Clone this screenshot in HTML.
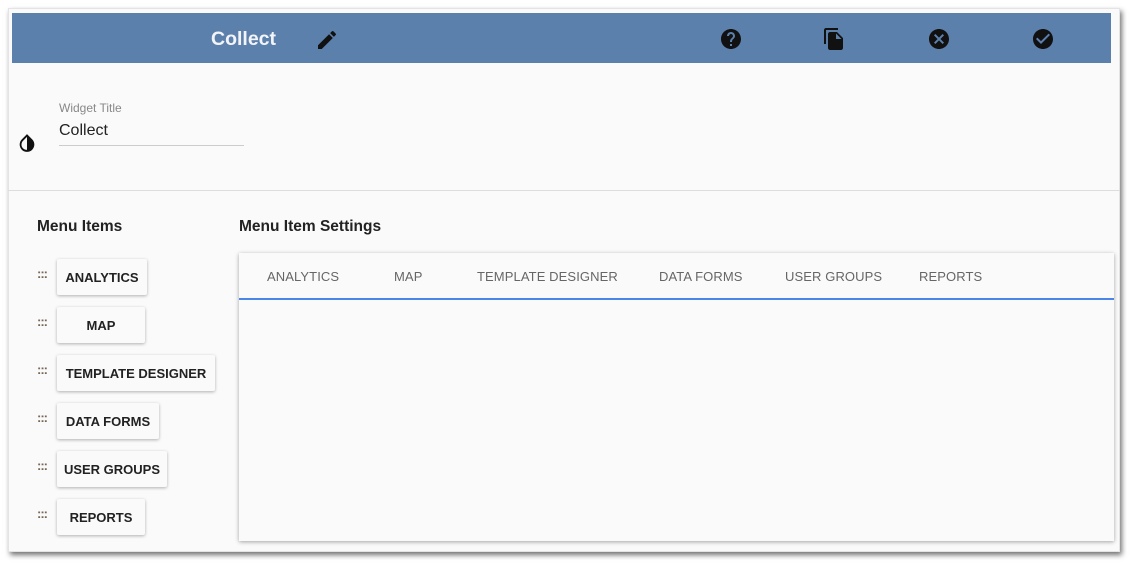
<!DOCTYPE html>
<html><head><meta charset="utf-8"><style>
*{margin:0;padding:0;box-sizing:border-box}
body{width:1134px;height:568px;background:#fff;font-family:"Liberation Sans",sans-serif;position:relative;overflow:hidden}
.panel{position:absolute;left:8px;top:8px;width:1112px;height:544px;background:#fafafa;box-shadow:2px 3px 5px rgba(0,0,0,.55);border:1px solid #e4e4e4}
.hdr{position:absolute;left:12px;top:13px;width:1099px;height:50px;background:#5c80ac}
.ttl{position:absolute;left:211px;top:28px;color:#f2f4f8;font-weight:bold;font-size:19.5px}
.ic{position:absolute}
.lbl{position:absolute;left:59px;top:101px;font-size:12px;color:#888}
.val{position:absolute;left:59px;top:122px;font-size:16px;color:#222}
.line{position:absolute;left:59px;top:145px;width:185px;height:1px;background:#ccc}
.sep{position:absolute;left:8px;top:190px;width:1112px;height:1px;background:#ddd}
.h{position:absolute;font-weight:bold;font-size:15.5px;color:#222}
.btn{position:absolute;left:57px;height:36px;background:#fafafa;box-shadow:0 1px 3px rgba(0,0,0,.3);border-radius:2px;font-size:13px;font-weight:bold;color:#222;display:flex;align-items:center;justify-content:center}
.dots{position:absolute;left:37px;font-size:13px;color:#765;letter-spacing:-1px;font-weight:bold}
.tabs{position:absolute;left:239px;top:253px;width:875px;height:288px;background:#fafafa;box-shadow:0 1px 4px rgba(0,0,0,.35)}
.tab{position:absolute;top:16px;font-size:13px;color:#666;letter-spacing:.1px}
.ul{position:absolute;left:0;top:45px;width:100%;height:2px;background:#4a86e8}
</style></head><body>
<div class="panel"></div>
<div class="hdr"></div>
<div class="ttl">Collect</div>
<svg class="ic" style="left:315px;top:28px" width="24" height="24" viewBox="0 0 24 24"><path fill="#111" d="M3 17.25V21h3.75L17.81 9.94l-3.75-3.75L3 17.25zM20.71 7.04a1 1 0 000-1.41l-2.34-2.34a1 1 0 00-1.41 0l-1.83 1.83 3.75 3.75 1.83-1.83z"/></svg>
<svg class="ic" style="left:719px;top:27px" width="24" height="24" viewBox="0 0 24 24"><path fill="#111" d="M12 2C6.48 2 2 6.48 2 12s4.48 10 10 10 10-4.48 10-10S17.52 2 12 2zm1 17h-2v-2h2v2zm2.070-7.75l-.9.92C13.45 12.9 13 13.5 13 15h-2v-.5c0-1.1.45-2.1 1.17-2.83l1.24-1.26c.37-.36.59-.86.59-1.41 0-1.1-.9-2-2-2s-2 .9-2 2H8c0-2.21 1.79-4 4-4s4 1.79 4 4c0 .88-.36 1.68-.93 2.250z"/></svg>
<svg class="ic" style="left:822px;top:27px" width="24" height="24" viewBox="0 0 24 24"><path fill="#111" d="M16 1H4c-1.1 0-2 .9-2 2v14h2V3h12V1zm-1 4l6 6v10c0 1.1-.9 2-2 2H7.99C6.89 23 6 22.1 6 21l.01-14c0-1.1.89-2 1.99-2h7zm-1 7h5.5L14 6.5V12z"/></svg>
<svg class="ic" style="left:927px;top:27px" width="24" height="24" viewBox="0 0 24 24"><path fill="#111" d="M12 2C6.47 2 2 6.47 2 12s4.47 10 10 10 10-4.47 10-10S17.53 2 12 2zm5 13.59L15.59 17 12 13.41 8.41 17 7 15.59 10.59 12 7 8.41 8.41 7 12 10.59 15.59 7 17 8.41 13.41 12 17 15.59z"/></svg>
<svg class="ic" style="left:1031px;top:27px" width="24" height="24" viewBox="0 0 24 24"><path fill="#111" d="M12 2C6.48 2 2 6.48 2 12s4.48 10 10 10 10-4.48 10-10S17.52 2 12 2zm-2 15l-5-5 1.41-1.41L10 14.17l7.59-7.59L19 8l-9 9z"/></svg>
<svg class="ic" style="left:16px;top:132px" width="22" height="22" viewBox="0 0 24 24"><path fill="#111" d="M17.66 8L12 2.35 6.34 8A8.02 8.02 0 004 13.64c0 2 .78 4.11 2.34 5.67a7.99 7.99 0 0011.32 0c1.56-1.56 2.34-3.67 2.34-5.67S19.22 9.56 17.66 8zM6 14c.01-2 .62-3.27 1.76-4.4L12 5.27V19.5c-3.31 0-6-2.7-6-5.5z"/></svg>
<div class="lbl">Widget Title</div>
<div class="val">Collect</div>
<div class="line"></div>
<div class="sep"></div>
<div class="h" style="left:37px;top:218px">Menu Items</div>
<div class="h" style="left:239px;top:218px">Menu Item Settings</div>

<div class="dots" style="top:266px">:::</div><div class="btn" style="top:259px;width:90px">ANALYTICS</div>
<div class="dots" style="top:314px">:::</div><div class="btn" style="top:307px;width:88px">MAP</div>
<div class="dots" style="top:362px">:::</div><div class="btn" style="top:355px;width:158px">TEMPLATE DESIGNER</div>
<div class="dots" style="top:410px">:::</div><div class="btn" style="top:403px;width:102px">DATA FORMS</div>
<div class="dots" style="top:458px">:::</div><div class="btn" style="top:451px;width:110px">USER GROUPS</div>
<div class="dots" style="top:506px">:::</div><div class="btn" style="top:499px;width:88px">REPORTS</div>

<div class="tabs">
<div class="tab" style="left:28px">ANALYTICS</div>
<div class="tab" style="left:155px">MAP</div>
<div class="tab" style="left:238px">TEMPLATE DESIGNER</div>
<div class="tab" style="left:420px">DATA FORMS</div>
<div class="tab" style="left:546px">USER GROUPS</div>
<div class="tab" style="left:680px">REPORTS</div>
<div class="ul"></div>
</div>
</body></html>
